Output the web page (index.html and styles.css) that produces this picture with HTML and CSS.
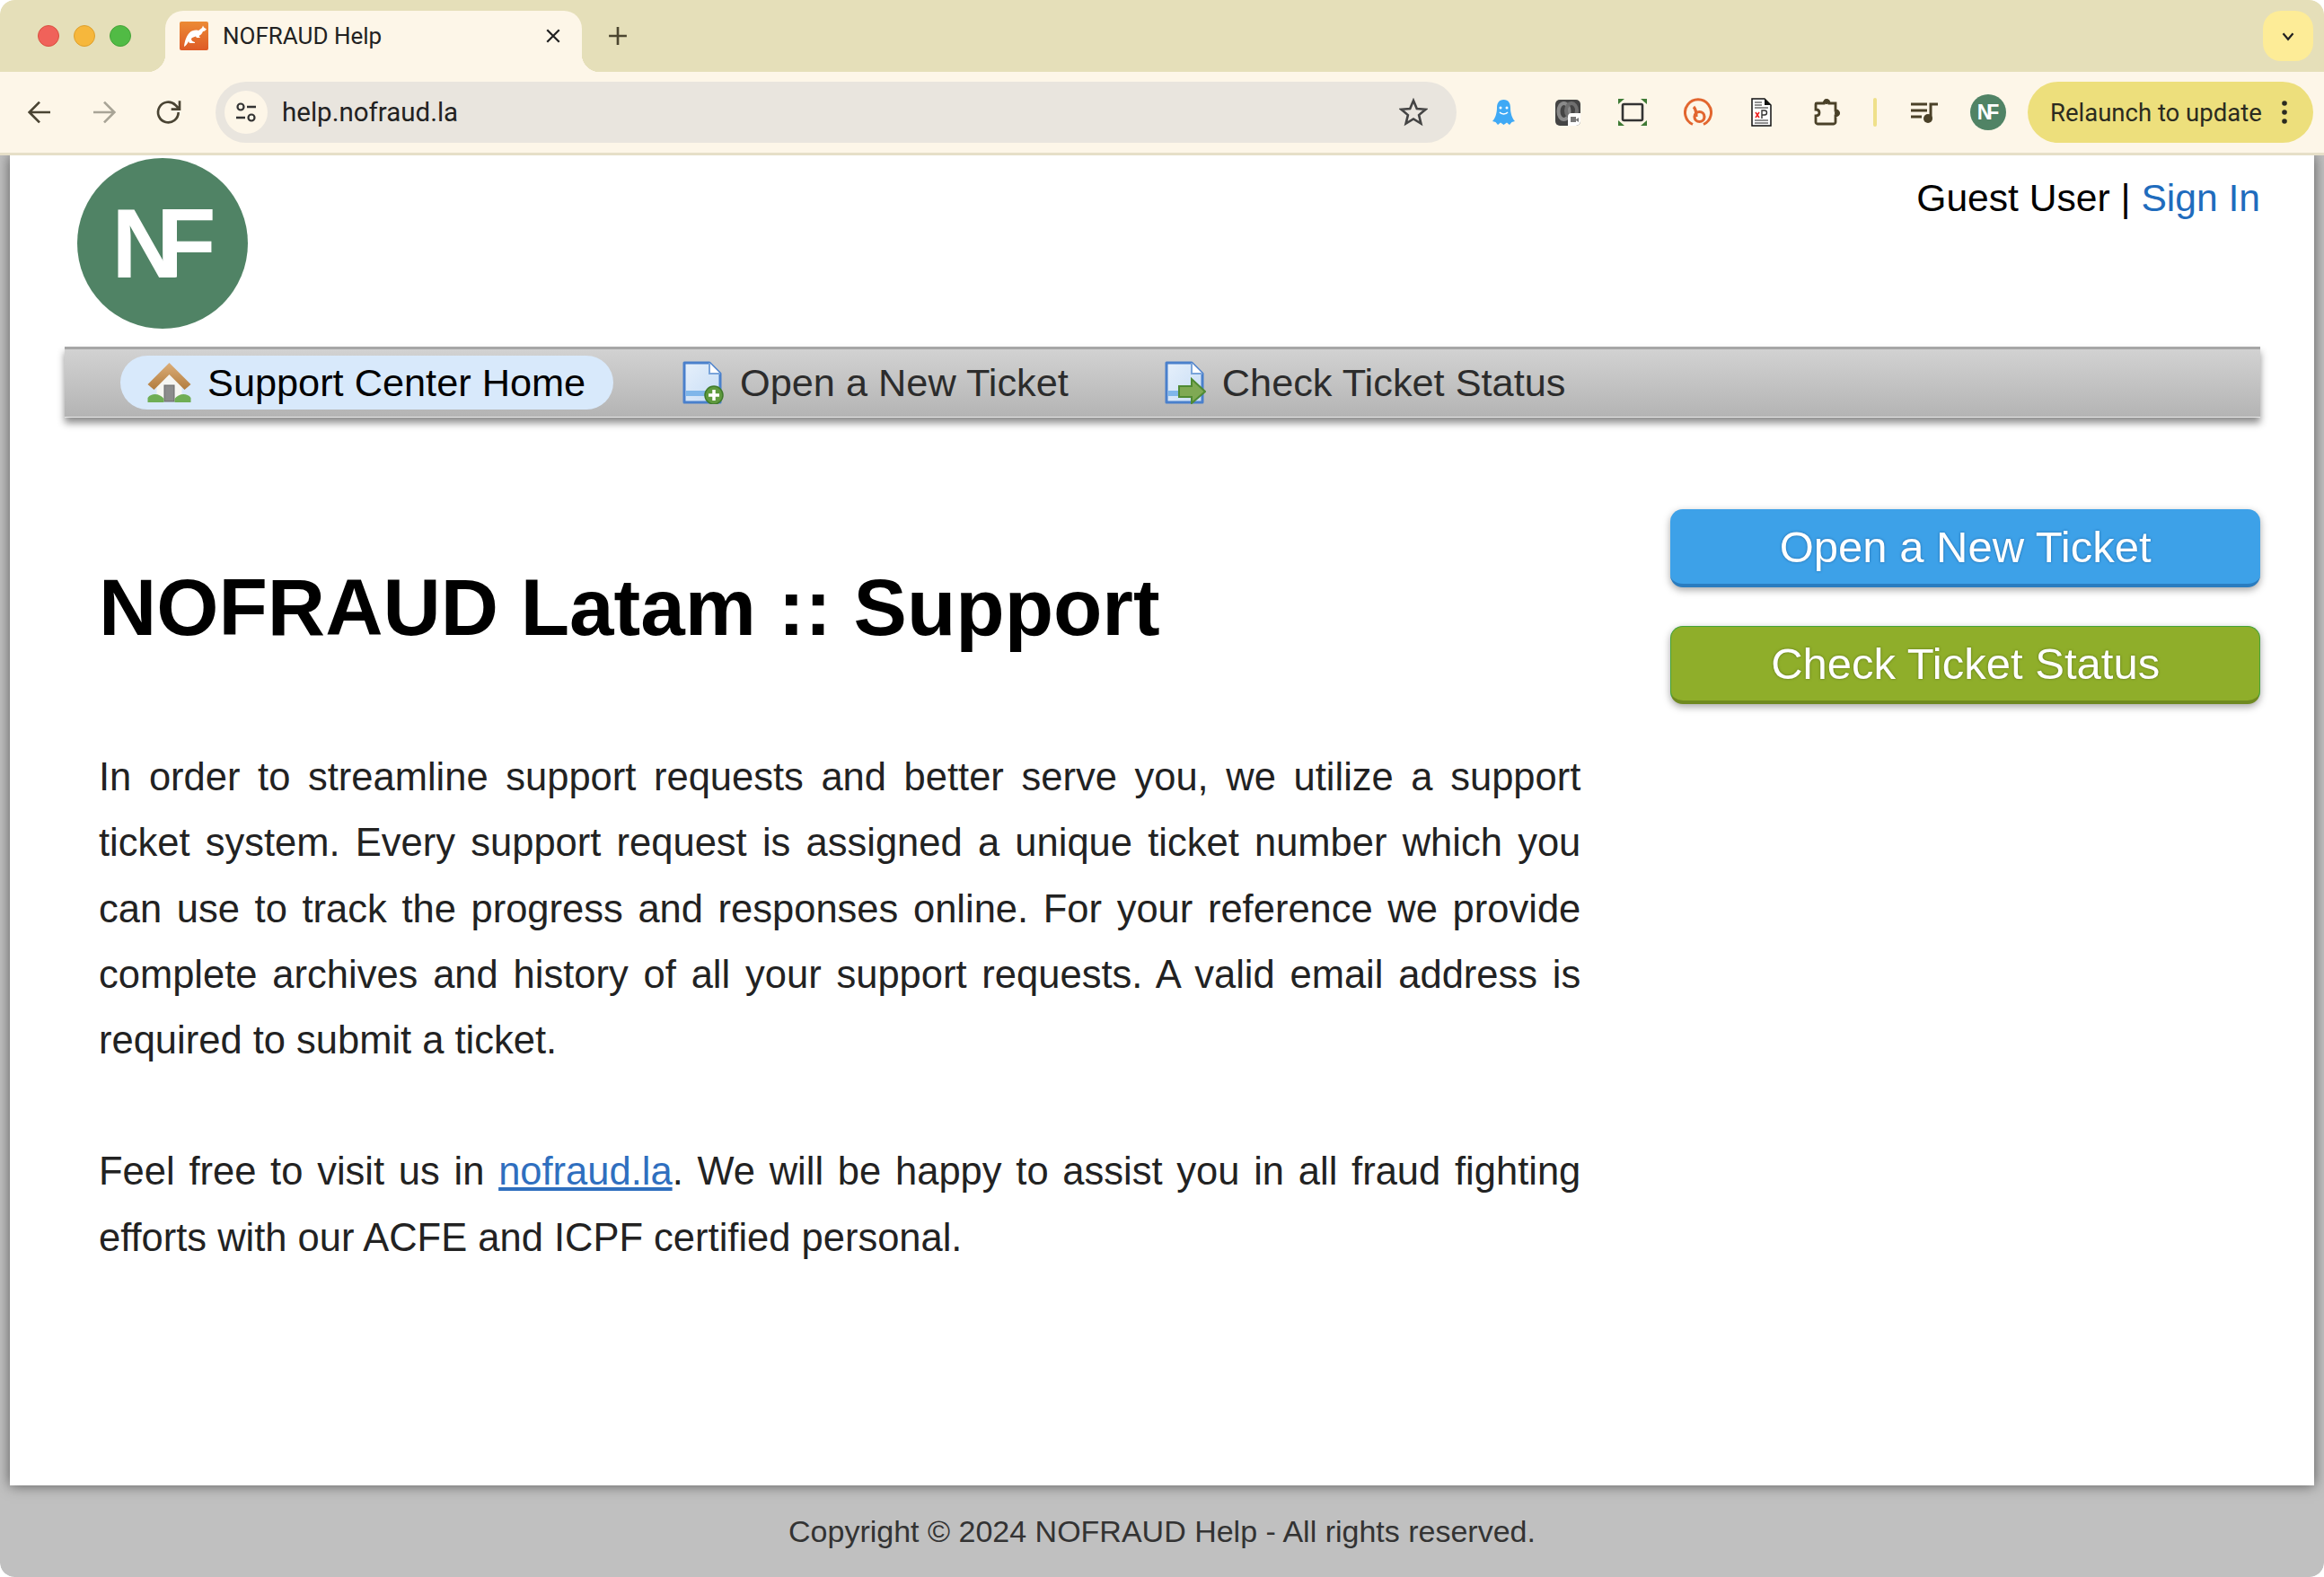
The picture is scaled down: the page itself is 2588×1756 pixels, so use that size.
FILE: index.html
```html
<!DOCTYPE html>
<html lang="en">
<head>
  <meta charset="UTF-8" />
  <title>NOFRAUD Help</title>
  <link rel="stylesheet" href="styles.css">
</head>
<body>
  <div class="browser">
    <div class="tabstrip">
      <div class="lights">
        <span class="light red"></span>
        <span class="light yellow"></span>
        <span class="light green"></span>
      </div>
      <div class="tab">
        <svg class="favicon" viewBox="0 0 32 32">
          <defs>
            <linearGradient id="favGrad" x1="0" y1="0" x2="0" y2="1">
              <stop offset="0" stop-color="#ec8a35"/>
              <stop offset="1" stop-color="#de5a26"/>
            </linearGradient>
          </defs>
          <rect width="32" height="32" rx="2" fill="url(#favGrad)"/>
          <path d="M5 28C5.500 22 8 15 11 12.500 14 9.500 18 9 21 10L25 7l1-2.500 1 2 3 2-2 2-2 .5c-1 2-2 4-4.500 5L23 18h-4l-1-1.500c-2 .5-3.500 1-5 2.500 0 2 1 3 4 4v1h-6l-1-2c-1 2-3 5-5 6z" fill="#fff"/>
        </svg>
        <span class="tab-title">NOFRAUD Help</span>
        <svg class="tab-close" viewBox="0 0 16 16"><path d="M2 2l12 12M14 2L2 14" stroke="#222" stroke-width="2" fill="none"/></svg>
      </div>
      <svg class="new-tab" viewBox="0 0 20 20"><path d="M10 1v18M1 10h18" stroke="#4c4630" stroke-width="2.400" fill="none"/></svg>
      <div class="tab-search">
        <svg viewBox="0 0 14 10" width="16" height="11"><path d="M2 2l5 6 5-6" stroke="#222" stroke-width="2" fill="none"/></svg>
      </div>
    </div>

    <div class="toolbar">
      <svg class="nav-btn" viewBox="0 0 24 24"><path d="M21 12H4M12 3.500L3.500 12l8.500 8.500" stroke="#4a4433" stroke-width="2" fill="none"/></svg>
      <svg class="nav-btn" viewBox="0 0 24 24"><path d="M3 12h17M12 3.500l8.500 8.500-8.500 8.500" stroke="#a8a496" stroke-width="2" fill="none"/></svg>
      <svg class="nav-btn" viewBox="0 0 24 24"><path d="M20 12a8.500 8.500 0 1 1-2.500-6L21 9.500M21 2.500v7h-7" stroke="#4a4433" stroke-width="2" fill="none"/></svg>
      <div class="omnibox">
        <span class="site-info">
          <svg viewBox="0 0 26 26" width="26" height="26">
            <circle cx="7" cy="7" r="3.500" stroke="#333" stroke-width="2.200" fill="none"/>
            <path d="M14 7h10M2 19h10" stroke="#333" stroke-width="2.400"/>
            <circle cx="19" cy="19" r="3.500" stroke="#333" stroke-width="2.200" fill="none"/>
          </svg>
        </span>
        <span class="url">help.nofraud.la</span>
        <svg class="star" viewBox="0 0 32 32"><path d="M16 3l3.800 9 9.700.8-7.400 6.300 2.300 9.500L16 23.500 7.600 28.600l2.300-9.500-7.400-6.300 9.700-.8z" stroke="#444" stroke-width="2.600" fill="none"/></svg>
      </div>
      <div class="extensions">
        <svg class="ext ext-ghost" viewBox="0 0 25 28"><path d="M12.500 0C18 0 20 4 20 9c0 6 2 12 5 15l-3.500 1-2.500 3-3-2.500L12.500 28l-3.500-2.500L6 28l-2.500-3L0 24c3-3 5-9 5-15 0-5 2-9 7.500-9z" fill="#3fa9f5"/><circle cx="9" cy="9" r="1.500" fill="#fff"/><circle cx="16" cy="9" r="1.500" fill="#fff"/><path d="M8 14c2 2.500 7 2.500 9 0" stroke="#fff" stroke-width="1.500" fill="none"/></svg>
        <svg class="ext ext-coffee" viewBox="0 0 28 29"><rect width="28" height="29" rx="5" fill="#444"/><ellipse cx="9.500" cy="13" rx="6" ry="9" fill="none" stroke="#8a8a8a" stroke-width="4"/><ellipse cx="18" cy="12" rx="6" ry="8" fill="none" stroke="#6f6f6f" stroke-width="4"/><path d="M14 29V19a4 4 0 0 1 4-4h10v9a5 5 0 0 1-5 5z" fill="#fff"/><rect x="17" y="19" width="6" height="6" fill="#777"/><path d="M23 22l3-2v5l-3-2z" fill="#777"/></svg>
        <svg class="ext ext-screen" viewBox="0 0 32 30"><path d="M0 0h7L0 6zM32 0h-7l7 6zM0 30h7l-7-6zM32 30h-7l7-6z" fill="#3f7a35"/><rect x="5" y="6" width="22" height="18" rx="1.500" stroke="#333" stroke-width="2.600" fill="none"/></svg>
        <svg class="ext ext-bitly" viewBox="0 0 32 32"><path d="M10 29.500A14.500 14.500 0 1 1 22 29.500" stroke="#e2662f" stroke-width="3" fill="none"/><path d="M11 10c3 3 3 7 3 11" stroke="#e2662f" stroke-width="3.200" fill="none"/><circle cx="17.500" cy="21" r="5.500" stroke="#e2662f" stroke-width="3.200" fill="none"/></svg>
        <svg class="ext ext-doc" viewBox="0 0 23 32"><path d="M1 1h14l7 7v23H1z" fill="#fff" stroke="#111" stroke-width="1.500"/><path d="M15 1l7 7h-7z" fill="#111"/><path d="M4 5h8M4 8h8M4 11h15M4 25h15M4 28h15" stroke="#222"/><path d="M5 16l4 6M9 16l-4 6" stroke="#e22" stroke-width="1.600"/><path d="M12 23v-9h3a2.500 2.500 0 0 1 0 5h-3" stroke="#333" stroke-width="1.400" fill="none"/></svg>
        <svg class="ext ext-puzzle" viewBox="0 0 30 32"><path d="M3 6h8c0-4 6-4 6 0h7v8c4 0 4 6 0 6v7c0 1-1 2-2 2H4c-1 0-2-1-2-2v-7c3 0 4-2 4-3.500S5 13 2 13V7c0-.500.500-1 1-1z" stroke="#4a4128" stroke-width="2.800" fill="none"/><circle cx="14" cy="4" r="3" fill="#4a4128"/><circle cx="26" cy="17" r="3" fill="#4a4128"/></svg>
        <span class="ext-divider"></span>
        <svg class="ext ext-music" viewBox="0 0 30 23"><path d="M0 2h18M0 9h18M0 16h12" stroke="#4a4128" stroke-width="3"/><path d="M22 18V2h8" stroke="#4a4128" stroke-width="3" fill="none"/><circle cx="19" cy="18" r="5" fill="#4a4128"/></svg>
        <span class="avatar">NF</span>
      </div>
      <div class="relaunch">
        <span>Relaunch to update</span>
        <svg viewBox="0 0 6 26" width="6" height="26"><circle cx="3" cy="3" r="2.800" fill="#2b2b20"/><circle cx="3" cy="13" r="2.800" fill="#2b2b20"/><circle cx="3" cy="23" r="2.800" fill="#2b2b20"/></svg>
      </div>
    </div>
  </div>

  <div class="page">
    <div class="container">
      <div class="header">
        <div class="logo">NF</div>
        <p class="user-info">Guest User | <a href="#">Sign In</a></p>
      </div>

      <ul class="nav">
        <li class="active">
          <svg class="nav-icon" viewBox="0 0 48 44">
            <defs>
              <linearGradient id="roofGrad" x1="0" y1="0" x2="0" y2="1">
                <stop offset="0" stop-color="#dcae78"/>
                <stop offset="1" stop-color="#b27c3e"/>
              </linearGradient>
            </defs>
            <path d="M24 13l14 14v15H10V27z" fill="#f6f6f2"/>
            <rect x="18.500" y="25" width="11" height="18" fill="#8c8c8c" stroke="#6a6a6a"/>
            <path d="M24 0l24 24-7 6-17-17L7 30l-7-6z" fill="url(#roofGrad)"/>
            <path d="M0 44v-5c2-3 5-4 8-4 4 0 8 2 10 5v4zM48 44v-5c-2-3-5-4-8-4-4 0-8 2-10 5v4z" fill="#6fae55"/>
          </svg>
          <a href="#" class="nav-link">Support Center Home</a>
        </li>
        <li>
          <svg class="nav-icon" viewBox="0 0 46 48">
            <defs>
              <linearGradient id="docGrad" x1="0" y1="0" x2="1" y2="1">
                <stop offset="0" stop-color="#e6f0fb"/>
                <stop offset="1" stop-color="#c6dcf5"/>
              </linearGradient>
            </defs>
            <path d="M2 2h28l12 12v32H2z" fill="url(#docGrad)" stroke="#4a80cc" stroke-width="3" stroke-linejoin="round"/>
            <path d="M30 2v12h12" fill="#fff" stroke="#7aa4da" stroke-width="2"/>
            <rect x="4" y="33" width="36" height="6" fill="#7fb6ea"/>
            <circle cx="35" cy="38" r="10" fill="#5f9a3e" stroke="#3f7a2a" stroke-width="1.500"/>
            <path d="M35 32v12M29 38h12" stroke="#fff" stroke-width="3.500"/>
          </svg>
          <a href="#" class="nav-link">Open a New Ticket</a>
        </li>
        <li class="last">
          <svg class="nav-icon" viewBox="0 0 46 48">
            <path d="M2 2h28l12 12v32H2z" fill="url(#docGrad)" stroke="#4a80cc" stroke-width="3" stroke-linejoin="round"/>
            <path d="M30 2v12h12" fill="#fff" stroke="#7aa4da" stroke-width="2"/>
            <rect x="4" y="33" width="14" height="6" fill="#7fb6ea"/>
            <path d="M16 28h14v-8l15 14-15 13v-7H16z" fill="#7fa954" stroke="#4f8a33" stroke-width="2"/>
          </svg>
          <a href="#" class="nav-link">Check Ticket Status</a>
        </li>
      </ul>

      <div class="content">
        <div class="landing">
          <h1>NOFRAUD Latam :: Support</h1>
          <p>In order to streamline support requests and better serve you, we utilize a support ticket system. Every support request is assigned a unique ticket number which you can use to track the progress and responses online. For your reference we provide complete archives and history of all your support requests. A valid email address is required to submit a ticket.</p>
          <p>Feel free to visit us in <a href="#">nofraud.la</a>. We will be happy to assist you in all fraud fighting efforts with our ACFE and ICPF certified personal.</p>
        </div>
        <div class="sidebar">
          <a href="#" class="big-button blue">Open a New Ticket</a>
          <a href="#" class="big-button green">Check Ticket Status</a>
        </div>
      </div>
    </div>
    <div class="footer">Copyright © 2024 NOFRAUD Help - All rights reserved.</div>
  </div>
</body>
</html>
```

FILE: styles.css
```css
* {
  box-sizing: border-box;
}

html, body {
  margin: 0;
  height: 100%;
  background-color: #fff;
  overflow: hidden;
}

body {
  display: flex;
  flex-direction: column;
  height: 1756px;
  font-family: "Liberation Sans", Arial, sans-serif;
  border-radius: 16px;
}

/* browser chrome */
.browser {
  flex: none;
  height: 173px;
  border-bottom: 3px solid #e6dfc8;
  background-color: #fdf6e8;
  border-radius: 16px 16px 0 0;
  overflow: hidden;
}

.tabstrip {
  height: 80px;
  background-color: #e5dfb9;
  display: flex;
  align-items: flex-end;
}

.lights {
  width: 184px;
  height: 80px;
  display: flex;
  align-items: center;
  gap: 16px;
  padding-left: 42px;
}

.light {
  width: 24px;
  height: 24px;
  border-radius: 50%;
}

.red { background-color: #f0625a; border: 1px solid #d9503f; }
.yellow { background-color: #f6b73c; border: 1px solid #dd9f2c; }
.green { background-color: #51bb45; border: 1px solid #44a338; }

.tab {
  width: 464px;
  height: 68px;
  background-color: #fdf6e8;
  border-radius: 20px 20px 0 0;
  display: flex;
  align-items: center;
  padding: 0 23px 12px 16px;
  position: relative;
}

.tab::before,
.tab::after {
  content: "";
  position: absolute;
  bottom: 0;
  width: 20px;
  height: 20px;
}

.tab::before {
  left: -20px;
  background: radial-gradient(circle at 0 0, transparent 20px, #fdf6e8 20.5px);
}

.tab::after {
  right: -20px;
  background: radial-gradient(circle at 100% 0, transparent 20px, #fdf6e8 20.5px);
}

.favicon {
  width: 32px;
  height: 32px;
  flex: none;
}

.tab-title {
  margin-left: 16px;
  flex: 1;
  font-family: Roboto, sans-serif;
  font-size: 26px;
  color: #222;
}

.tab-close {
  width: 18px;
  height: 18px;
}

.new-tab {
  width: 22px;
  height: 22px;
  margin: 0 0 29px 29px;
}

.tab-search {
  margin: 0 12px 12px auto;
  width: 56px;
  height: 56px;
  border-radius: 20px;
  background-color: #fdec97;
  display: flex;
  align-items: center;
  justify-content: center;
}

.toolbar {
  height: 90px;
  display: flex;
  align-items: center;
  padding: 0 12px 0 28px;
  position: relative;
}

.nav-btn {
  width: 32px;
  height: 32px;
  margin-right: 40px;
}

.omnibox {
  margin-left: -4px;
  width: 1382px;
  height: 68px;
  border-radius: 34px;
  background-color: #e9e5de;
  display: flex;
  align-items: center;
  padding: 0 32px 0 10px;
}

.site-info {
  width: 48px;
  height: 48px;
  border-radius: 50%;
  background-color: #fdf6e8;
  display: flex;
  align-items: center;
  justify-content: center;
}

.url {
  margin-left: 16px;
  flex: 1;
  font-family: Roboto, sans-serif;
  font-size: 29.5px;
  color: #222;
}

.star {
  width: 32px;
  height: 32px;
}

.extensions {
  flex: 1;
  display: flex;
  align-items: center;
  padding-left: 40px;
}

.ext {
  flex: none;
}

.ext-ghost { width: 25px; height: 28px; margin-right: 45px; }
.ext-coffee { width: 28px; height: 29px; margin-right: 42px; }
.ext-screen { width: 32px; height: 30px; margin-right: 41px; }
.ext-bitly { width: 32px; height: 32px; margin-right: 43px; }
.ext-doc { width: 23px; height: 32px; margin-right: 47px; }
.ext-puzzle { width: 30px; height: 32px; margin-right: 36px; }
.ext-music { width: 30px; height: 23px; margin-right: 36px; }

.ext-divider {
  width: 4px;
  height: 32px;
  border-radius: 2px;
  background-color: #efe08a;
  margin-right: 38px;
}

.avatar {
  width: 40px;
  height: 40px;
  border-radius: 50%;
  background-color: #508365;
  color: #fff;
  font-weight: bold;
  font-size: 23px;
  letter-spacing: -6px;
  padding-right: 6px;
  display: flex;
  align-items: center;
  justify-content: center;
}

.relaunch {
  flex: none;
  width: 318px;
  height: 68px;
  border-radius: 34px;
  background-color: #eddf7c;
  display: flex;
  align-items: center;
  justify-content: space-between;
  padding: 0 29px 0 25px;
  font-family: Roboto, sans-serif;
  font-size: 27.5px;
  color: #2b2b20;
}

/* page */
.page {
  flex: 1;
  display: flex;
  flex-direction: column;
  background-color: #c0c0c0;
  border-radius: 0 0 16px 16px;
  overflow: hidden;
}

.container {
  height: 1481px;
  margin: 0 11px;
  background-color: #fff;
  padding: 0 60px 0 61px;
  box-shadow: 0 0 14px rgba(0, 0, 0, 0.55);
}

.header {
  height: 213px;
  display: flex;
  justify-content: space-between;
  align-items: flex-start;
}

.logo {
  width: 190px;
  height: 190px;
  margin: 3px 0 0 14px;
  border-radius: 50%;
  background-color: #508365;
  color: #fff;
  font-weight: bold;
  font-size: 109px;
  letter-spacing: -29px;
  padding-right: 26px;
  display: flex;
  align-items: center;
  justify-content: center;
}

.user-info {
  margin: 20px 0 0;
  font-size: 42.6px;
  line-height: 54px;
  color: #000;
}

.user-info a {
  color: #1f6cbd;
  text-decoration: none;
}

.nav {
  list-style: none;
  margin: 0;
  padding: 7px 0 0 62px;
  height: 79px;
  display: flex;
  gap: 77px;
  border-top: 3px solid #a6a6a6;
  border-bottom: 1px solid #e8e8e8;
  background: linear-gradient(#d2d2d2, #b4b4b4);
  box-shadow: 0 6px 8px rgba(0, 0, 0, 0.45);
}

.nav li {
  height: 60px;
  display: flex;
  align-items: center;
  gap: 18px;
}

.nav li.active {
  width: 549px;
  padding-left: 30px;
  border-radius: 30px;
  background-color: #d8e9fb;
}

.nav li.last {
  margin-left: 30px;
}

.nav li.active .nav-link {
  color: #000;
}

.nav-icon {
  width: 46px;
  height: 48px;
  flex: none;
}

.nav li.active .nav-icon {
  width: 49px;
  height: 44px;
}

.nav-link {
  font-size: 43.3px;
  color: #2c2c2c;
  text-decoration: none;
}

.content {
  display: flex;
  padding-left: 38px;
}

.landing {
  width: 1651px;
  padding-top: 159px;
}

.landing h1 {
  margin: 0 0 101px;
  font-size: 89px;
  line-height: 104px;
  font-weight: bold;
  color: #000;
}

.landing p {
  margin: 0 0 73px;
  font-size: 43.5px;
  line-height: 73.300px;
  text-align: justify;
  color: #222;
}

.landing p a {
  color: #2f6fbf;
}

.sidebar {
  width: 657px;
  margin-left: 100px;
  padding-top: 102px;
  display: flex;
  flex-direction: column;
  gap: 43px;
}

.big-button {
  height: 87px;
  border-radius: 14px;
  display: flex;
  align-items: center;
  justify-content: center;
  color: #fff;
  font-size: 49px;
  text-decoration: none;
}

.big-button.blue {
  background-color: #3da1e8;
  border-bottom: 4px solid #2a7cbf;
  box-shadow: 0 3px 8px rgba(0, 0, 0, 0.35);
  text-shadow: 0 0 3px #1f66a3;
}

.big-button.green {
  background-color: #8fae2a;
  border-bottom: 4px solid #6f8a20;
  box-shadow: 0 3px 8px rgba(0, 0, 0, 0.35);
  text-shadow: 0 0 3px #5c7318;
}

.footer {
  flex: 1;
  display: flex;
  align-items: center;
  justify-content: center;
  font-size: 34px;
  color: #333;
}
```
